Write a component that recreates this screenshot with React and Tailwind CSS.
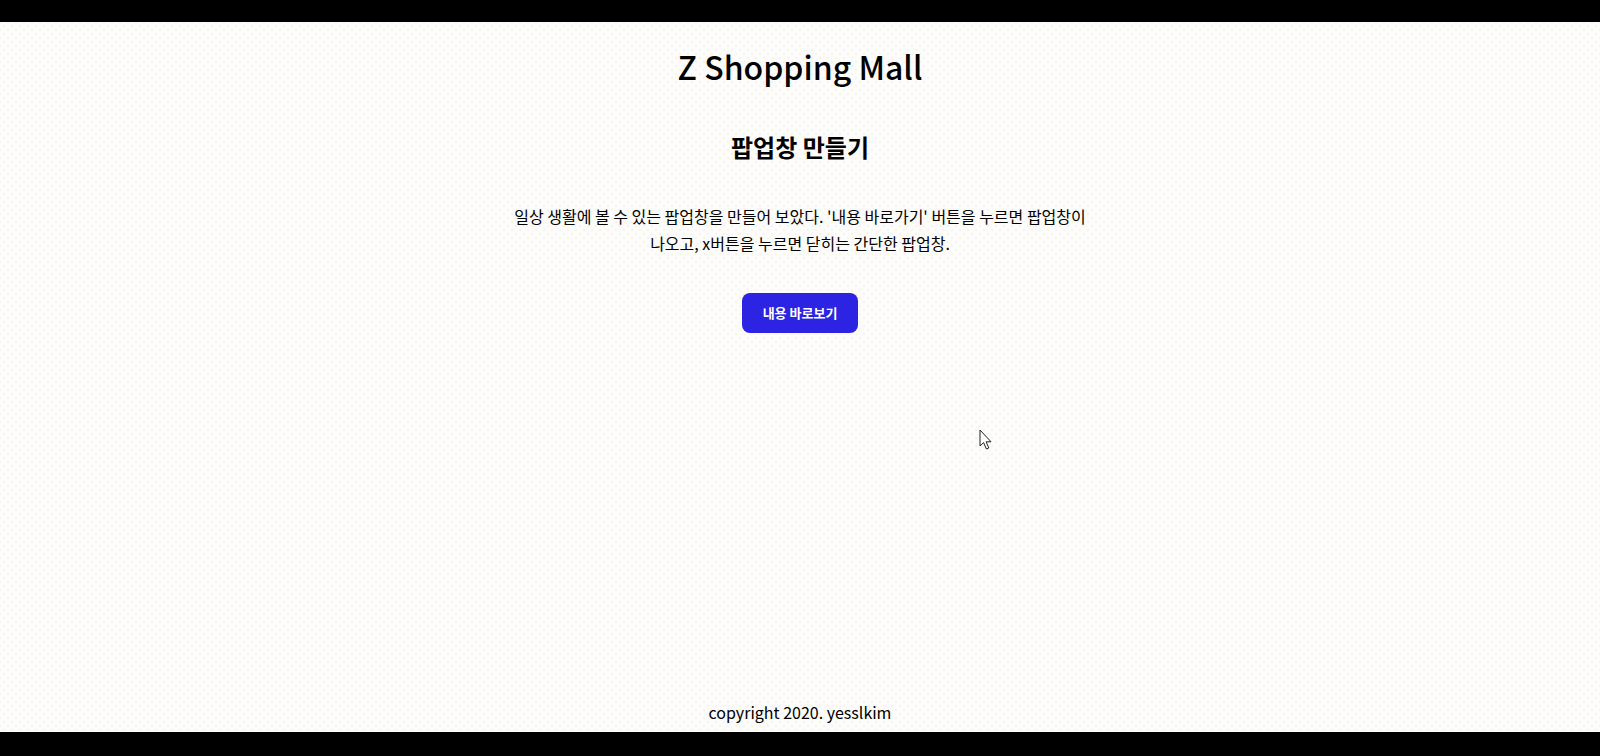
import React from 'react';

function Cursor() {
  return (
    <svg
      className="absolute left-[979px] top-[429px]"
      width="14"
      height="22"
      viewBox="0 0 14 22"
    >
      <path
        d="M1 1 L1 17 L4.6 13.6 L7.4 20 L9.8 19 L7.1 12.8 L12 12.8 Z"
        fill="#ffffff"
        stroke="#222222"
        strokeWidth="1"
        strokeLinejoin="round"
      />
    </svg>
  );
}

export default function App() {
  return (
    <div
      className="relative flex min-h-screen flex-col bg-[#fcfcfe] text-black"
      style={{ fontFamily: '"Noto Sans CJK KR", "Noto Sans", sans-serif' }}
    >
      <div className="h-[22px] bg-black" />

      {/* gif dither dots behind the page */}
      <div className="flex flex-1 flex-col bg-[radial-gradient(circle,#f8f2b0_0.5px,transparent_0.9px),radial-gradient(circle,#f8f2b0_0.5px,transparent_0.9px)] bg-[size:8px_8px] bg-[position:0_0,4px_4px]">
        <main className="flex flex-1 flex-col items-center">
          <h1 className="mt-[28px] text-[32px] leading-[32px] font-medium">Z Shopping Mall</h1>

          <h2 className="mt-[53px] text-[24px] leading-[24px] font-bold">팝업창 만들기</h2>

          <p className="mt-[44px] w-[600px] text-center text-[16px] leading-[27px] break-keep">
            일상 생활에 볼 수 있는 팝업창을 만들어 보았다. '내용 바로가기' 버튼을 누르면 팝업창이
            나오고, x버튼을 누르면 닫히는 간단한 팝업창.
          </p>

          <button className="mt-[36px] h-[40px] w-[116px] rounded-[8px] bg-[#2c24e2] text-[13px] font-bold text-white">
            내용 바로보기
          </button>
        </main>

        <footer className="pb-[8px] text-center text-[16px] leading-[24px]">
          copyright 2020. yesslkim
        </footer>
      </div>

      <div className="h-[24px] bg-black" />

      <Cursor />
    </div>
  );
}
